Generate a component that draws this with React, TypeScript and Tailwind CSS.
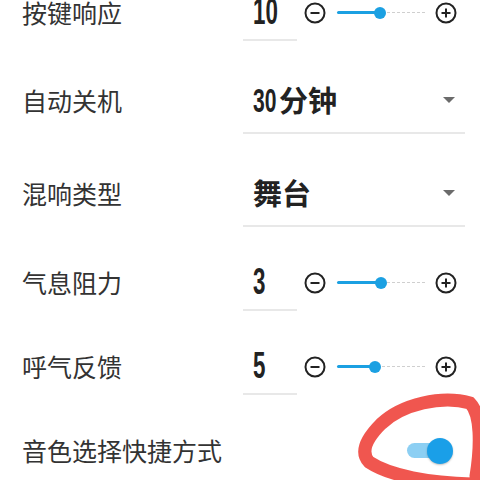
import React from "react";

const cjk = "font-['Noto_Sans_CJK_SC','Noto_Sans',sans-serif]";

const MinusIcon = () => (
  <svg width="22" height="22" viewBox="0 0 22 22" className="shrink-0">
    <circle cx="11" cy="11" r="9.5" fill="none" stroke="#222" strokeWidth="2" />
    <line x1="6.5" y1="11" x2="15.5" y2="11" stroke="#222" strokeWidth="2" />
  </svg>
);

const PlusIcon = () => (
  <svg width="22" height="22" viewBox="0 0 22 22" className="shrink-0">
    <circle cx="11" cy="11" r="9.5" fill="none" stroke="#222" strokeWidth="2" />
    <line x1="6.5" y1="11" x2="15.5" y2="11" stroke="#222" strokeWidth="2" />
    <line x1="11" y1="6.5" x2="11" y2="15.5" stroke="#222" strokeWidth="2" />
  </svg>
);

const Slider = ({ pos }: { pos: number }) => (
  <div className="relative w-[88px] h-[14px] shrink-0">
    <div className="absolute left-0 right-0 top-[6px] border-t border-dashed border-[#cfcfcf]" />
    <div className="absolute left-0 top-[5px] h-[3px] bg-[#1ba0e2] rounded-full" style={{ width: pos }} />
    <div
      className="absolute top-[1px] w-[12px] h-[12px] rounded-full bg-[#1ba0e2]"
      style={{ left: pos - 6 }}
    />
  </div>
);

const SliderRow = ({ label, value, pos }: { label: string; value: string; pos: number }) => (
  <div className="flex items-center h-[84px]">
    <div className={`w-[221px] text-[25px] text-[#333] ${cjk}`}>{label}</div>
    <div className="w-[54px] h-[56px] border-b-2 border-[#e8e8e8] flex items-center pl-[10px]">
      <span className="inline-block origin-left scale-x-[0.62] font-['Liberation_Sans',sans-serif] font-bold text-[36px] leading-none text-[#222]">
        {value}
      </span>
    </div>
    <div className="ml-[7px]">
      <MinusIcon />
    </div>
    <div className="ml-[11px]">
      <Slider pos={pos} />
    </div>
    <div className="ml-[10px]">
      <PlusIcon />
    </div>
  </div>
);

const SelectRow = ({ label, children, h }: { label: string; children: React.ReactNode; h: string }) => (
  <div className={`flex items-center ${h}`}>
    <div className={`w-[221px] text-[25px] text-[#333] ${cjk}`}>{label}</div>
    <div className="w-[222px] h-[66px] border-b-2 border-[#e8e8e8] flex items-center justify-between pl-[10px] pr-[10px]">
      <div className={`flex items-center font-bold text-[29px] text-[#222] ${cjk}`}>{children}</div>
      <div className="w-0 h-0 border-l-[6px] border-r-[6px] border-t-[6px] border-l-transparent border-r-transparent border-t-[#6b6b6b]" />
    </div>
  </div>
);

export default function App() {
  return (
    <div className="relative w-[480px] h-[480px] overflow-hidden bg-white">
      <div className="-mt-[29px] pl-[22px]">
        <SliderRow label="按键响应" value="10" pos={43} />
        <SelectRow label="自动关机" h="h-[92px]">
          <span className="inline-block w-[26px] origin-left scale-x-[0.62] font-['Liberation_Sans',sans-serif] text-[34px] leading-none">
            30
          </span>
          <span>分钟</span>
        </SelectRow>
        <SelectRow label="混响类型" h="h-[94px]">
          <span>舞台</span>
        </SelectRow>
        <SliderRow label="气息阻力" value="3" pos={44} />
        <SliderRow label="呼气反馈" value="5" pos={38} />
        <div className="flex items-center h-[84px]">
          <div className={`flex-1 text-[25px] text-[#333] ${cjk}`}>音色选择快捷方式</div>
          <div className="relative w-[46px] h-[26px] mr-[27px]">
            <div className="absolute left-0 right-[3px] top-[5px] h-[15px] rounded-full bg-[#8ccff3]" />
            <div className="absolute right-0 top-0 w-[26px] h-[26px] rounded-full bg-[#1a9fe8] shadow-[0_1px_2px_rgba(0,0,0,0.25)]" />
          </div>
        </div>
      </div>
      <svg className="absolute left-0 top-0 pointer-events-none" width="480" height="480" viewBox="0 0 480 480">
        <path
          d="M476 476 C481 445, 481 414, 470 403 C442 395, 402 404, 381 424 C366 439, 360 452, 369 462 C390 476, 430 483, 472 484"
          fill="none"
          stroke="#ee3f37"
          strokeOpacity="0.88"
          strokeWidth="13"
          strokeLinecap="round"
        />
      </svg>
    </div>
  );
}
